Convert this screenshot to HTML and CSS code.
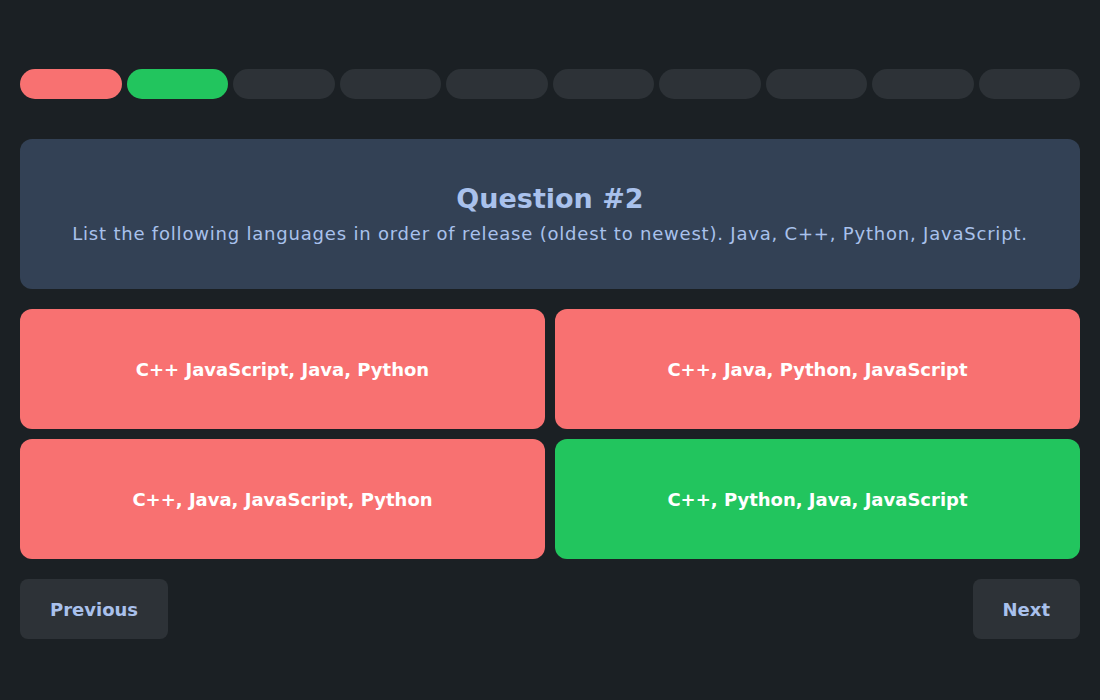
FILE: index.html
```html
<!DOCTYPE html>
<html lang="en">
<head>
<meta charset="utf-8">
<title>Quiz</title>
<link rel="stylesheet" href="styles.css">
</head>
<body>
<main class="quiz">
  <div class="progress">
    <div class="step wrong"></div>
    <div class="step right"></div>
    <div class="step"></div>
    <div class="step"></div>
    <div class="step"></div>
    <div class="step"></div>
    <div class="step"></div>
    <div class="step"></div>
    <div class="step"></div>
    <div class="step"></div>
  </div>
  <section class="question">
    <h1 class="q-title">Question #2</h1>
    <p class="q-text">List the following languages in order of release (oldest to newest). Java, C++, Python, JavaScript.</p>
  </section>
  <div class="answers">
    <button class="answer wrong">C++ JavaScript, Java, Python</button>
    <button class="answer wrong">C++, Java, Python, JavaScript</button>
    <button class="answer wrong">C++, Java, JavaScript, Python</button>
    <button class="answer right">C++, Python, Java, JavaScript</button>
  </div>
  <nav class="nav">
    <button class="nav-btn">Previous</button>
    <button class="nav-btn">Next</button>
  </nav>
</main>
</body>
</html>
```
FILE: styles.css
```css
html, body {
  margin: 0;
  padding: 0;
  background: #1b2024;
  font-family: "DejaVu Sans", "Open Sans", sans-serif;
}
.quiz {
  padding: 69px 20px 0;
  display: flex;
  flex-direction: column;
}
.progress {
  display: flex;
  gap: 5px;
  height: 30px;
}
.step {
  flex: 1;
  border-radius: 15px;
  background: #2d3237;
}
.step.wrong { background: #f87171; }
.step.right { background: #22c55e; }
.question {
  margin-top: 40px;
  height: 150px;
  box-sizing: border-box;
  padding-top: 4px;
  background: #334155;
  border-radius: 12px;
  display: flex;
  flex-direction: column;
  align-items: center;
  justify-content: center;
  color: #a9c1ec;
  text-align: center;
}
.q-title {
  margin: 0;
  font-size: 27px;
  font-weight: 700;
  line-height: 36px;
  margin-top: -2px;
}
.q-text {
  margin: 2px 0 0;
  font-size: 18px;
  line-height: 30px;
  letter-spacing: 0.8px;
}
.answers {
  margin-top: 20px;
  display: grid;
  grid-template-columns: 1fr 1fr;
  gap: 10px;
}
.answer {
  height: 120px;
  border: none;
  border-radius: 12px;
  color: #fff;
  font-family: inherit;
  font-size: 18px;
  font-weight: 700;
}
.answer.wrong { background: #f87171; }
.answer.right { background: #22c55e; }
.nav {
  margin-top: 20px;
  display: flex;
  justify-content: space-between;
}
.nav-btn {
  height: 60px;
  padding: 0 30px;
  border: none;
  border-radius: 8px;
  background: #2d3237;
  color: #a9c1ec;
  font-family: inherit;
  font-size: 18px;
  font-weight: 700;
}
```
